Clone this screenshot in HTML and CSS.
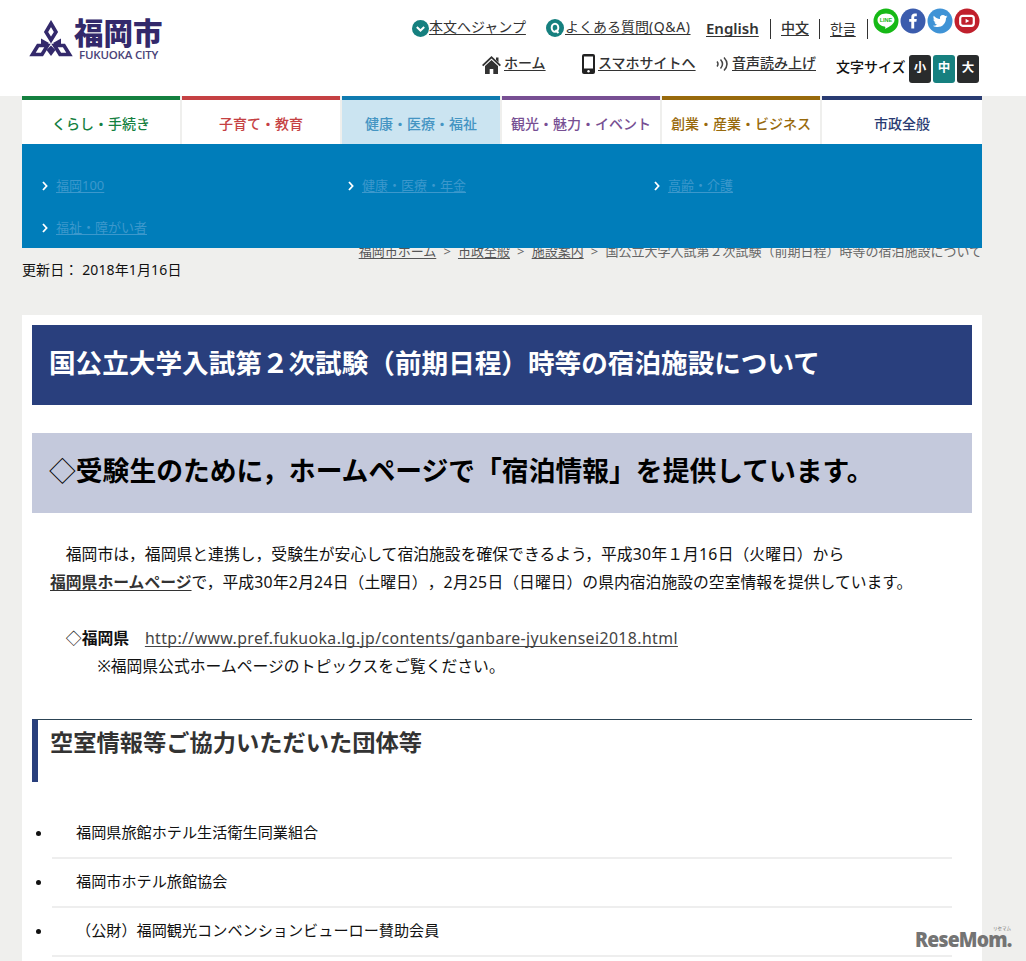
FILE: index.html
```html
<!DOCTYPE html>
<html lang="ja">
<head>
<meta charset="utf-8">
<title>福岡市</title>
<link rel="stylesheet" href="styles.css">
</head>
<body>
<header class="header">
  <div class="logo">
    <svg class="logo-mark" width="44" height="38" viewBox="0 0 44 38">
      <g fill="none" stroke="#33296b" stroke-width="3.6">
        <path d="M22 3.5L27 12L22 20L17 12Z"/>
        <path d="M3.5 34.5L9 25.500L18.500 25.500L13 34.500Z"/>
        <path d="M40.500 34.500L35 25.500L25.500 25.500L31 34.500Z"/>
      </g>
      <g fill="#33296b">
        <path d="M12 18.500L20 23L16 26.500L12 25Z"/>
        <path d="M32 18.500L24 23L28 26.500L32 25Z"/>
        <path d="M22 25.500L26.500 30L22 36L17.500 30Z"/>
      </g>
    </svg>
    <div class="logo-text"><span class="logo-ja">福岡市</span><span class="logo-en">FUKUOKA CITY</span></div>
  </div>
  <div class="tools">
    <div class="row row-top">
      <span class="item"><svg class="ic-jump" width="17" height="17" viewBox="0 0 17 17"><circle cx="8.500" cy="8.500" r="8.500" fill="#16807f"/><path d="M4.800 7l3.700 3.500L12.200 7" fill="none" stroke="#fff" stroke-width="2"/></svg><a href="#" class="link">本文へジャンプ</a></span>
      <span class="item"><svg class="ic-q" width="18" height="18" viewBox="0 0 18 18"><circle cx="9" cy="9" r="9" fill="#16807f"/><ellipse cx="9" cy="8.800" rx="3.300" ry="4" fill="none" stroke="#fff" stroke-width="2"/><path d="M9.500 11l3 3" stroke="#fff" stroke-width="2"/></svg><a href="#" class="link qa">よくある質問<span class="qa">(Q&amp;A)</span></a></span>
      <span class="item lang"><a href="#" class="link eng">English</a></span>
      <span class="item lang bar"><a href="#" class="link mid">中文</a></span>
      <span class="item lang bar"><a href="#" class="link">한글</a></span>
      <span class="item lang bar"></span>
      <span class="social">
        <svg width="26" height="26" viewBox="0 0 26 26"><circle cx="13" cy="13" r="12.500" fill="#16b916"/><path d="M13 5.500c-5 0-8.500 2.900-8.500 6.600 0 3.300 2.900 5.900 7 6.500 1.100.2.900 1.100.7 2.400 3.900-2 9.300-5.100 9.300-8.900 0-3.700-3.500-6.600-8.500-6.600z" fill="#fff"/><text x="13" y="14.200" text-anchor="middle" class="line-label">LINE</text></svg>
        <svg width="26" height="26" viewBox="0 0 26 26"><circle cx="13" cy="13" r="12.500" fill="#3b5cad"/><path d="M11.300 20.500v-6.700H9.200v-2.700h2.100V9.200c0-2.400 1.300-3.700 3.500-3.700h2v2.700h-1.300c-1 0-1.300.4-1.300 1.300v1.600h2.600l-.4 2.700h-2.200v6.700z" fill="#fff"/></svg>
        <svg width="26" height="26" viewBox="0 0 26 26"><circle cx="13" cy="13" r="12.500" fill="#3f93d6"/><path d="M20.500 8.600c-.6.3-1.100.4-1.700.5.600-.4 1.100-1 1.300-1.700-.6.400-1.200.6-1.900.7a3 3 0 0 0-5.200 2.800c-2.500-.1-4.700-1.300-6.200-3.200-.8 1.400-.4 3.200.9 4-.5 0-.9-.1-1.300-.4 0 1.500 1 2.700 2.400 3-.4.1-.9.100-1.300.1.400 1.200 1.500 2 2.800 2.100A6 6 0 0 1 5.900 17.700c5.800 3.600 13.200.1 13.100-7.600.6-.4 1.100-.9 1.500-1.500z" fill="#fff"/></svg>
        <svg width="26" height="26" viewBox="0 0 26 26"><circle cx="13" cy="13" r="12.500" fill="#c0202c"/><rect x="6.200" y="7.800" width="13.600" height="10" rx="2.500" fill="none" stroke="#fff" stroke-width="2.200"/><path d="M11.600 10.700l3.700 2.200-3.700 2.200z" fill="#fff"/></svg>
      </span>
    </div>
    <div class="row row-bottom">
      <span class="item"><svg class="ic-home" width="19" height="18" viewBox="0 0 19 18"><path d="M9.500 0L19 9l-1.300 1.300L9.500 2.600 1.300 10.300 0 9z" fill="#333"/><path d="M14 1.500h2.500v5L14 4z" fill="#333"/><path d="M9.500 4l6.500 6v8h-4.700v-5H7.700v5H3v-8z" fill="#333"/></svg><a href="#" class="link mid">ホーム</a></span>
      <span class="item"><svg class="ic-phone" width="15" height="20" viewBox="0 0 15 20"><rect x="1" y="0" width="13" height="20" rx="2" fill="#222"/><rect x="3" y="2.500" width="9" height="12" fill="#fff"/><circle cx="7.500" cy="17.300" r="1.200" fill="#fff"/></svg><a href="#" class="link mid">スマホサイトへ</a></span>
      <span class="item"><svg class="ic-wave" width="14" height="16" viewBox="0 0 14 16"><path d="M2 5.500q2 2.500 0 5M5.500 3.500q4 4.500 0 9M9 1.500q6 6.500 0 13" fill="none" stroke="#444" stroke-width="1.500"/></svg><a href="#" class="link mid">音声読み上げ</a></span>
      <span class="item size-label">文字サイズ</span>
      <span class="sizes"><b>小</b><b class="on">中</b><b>大</b></span>
    </div>
  </div>
</header>
<div class="wrap">
  <nav class="tabs">
    <a class="tab green">くらし・手続き</a>
    <a class="tab red">子育て・教育</a>
    <a class="tab blue">健康・医療・福祉</a>
    <a class="tab purple">観光・魅力・イベント</a>
    <a class="tab brown">創業・産業・ビジネス</a>
    <a class="tab navy">市政全般</a>
    <ul class="menu">
      <li><svg width="6" height="10" viewBox="0 0 6 10"><path d="M1 1l3.600 4L1 9"/></svg><a href="#">福岡100</a></li>
      <li><svg width="6" height="10" viewBox="0 0 6 10"><path d="M1 1l3.600 4L1 9"/></svg><a href="#">健康・医療・年金</a></li>
      <li><svg width="6" height="10" viewBox="0 0 6 10"><path d="M1 1l3.600 4L1 9"/></svg><a href="#">高齢・介護</a></li>
      <li><svg width="6" height="10" viewBox="0 0 6 10"><path d="M1 1l3.600 4L1 9"/></svg><a href="#">福祉・障がい者</a></li>
    </ul>
  </nav>
  <div class="crumbs"><a href="#">福岡市ホーム</a><i>&gt;</i><a href="#">市政全般</a><i>&gt;</i><a href="#">施設案内</a><i>&gt;</i><span>国公立大学入試第２次試験（前期日程）時等の宿泊施設について</span></div>
  <p class="updated">更新日： 2018年1月16日</p>
  <main class="content">
    <h1 class="title">国公立大学入試第２次試験（前期日程）時等の宿泊施設について</h1>
    <h2 class="lead"><span class="dia">◇</span>受験生のために，ホームページで「宿泊情報」を提供しています。</h2>
    <div class="text">
      <p>　福岡市は，福岡県と連携し，受験生が安心して宿泊施設を確保できるよう，平成<span class="n">30</span>年１月<span class="n">16</span>日（火曜日）から</p>
      <p><a href="#" class="pref">福岡県ホームページ</a>で，平成<span class="n">30</span>年<span class="n">2</span>月<span class="n">24</span>日（土曜日），<span class="n">2</span>月<span class="n">25</span>日（日曜日）の県内宿泊施設の空室情報を提供しています。</p>
      <p class="gap">　◇<b>福岡県</b>　<a href="#" class="url">http://www.pref.fukuoka.lg.jp/contents/ganbare-jyukensei2018.html</a></p>
      <p>　　　※福岡県公式ホームページのトピックスをご覧ください。</p>
    </div>
    <h3 class="section">空室情報等ご協力いただいた団体等</h3>
    <ul class="groups">
      <li><i></i><span>福岡県旅館ホテル生活衛生同業組合</span></li>
      <li><i></i><span>福岡市ホテル旅館協会</span></li>
      <li><i></i><span>（公財）福岡観光コンベンションビューロー賛助会員</span></li>
    </ul>
  </main>
</div>
<div class="mark"><small>リセマム</small><span>ReseMom.</span></div>
</body>
</html>
```
FILE: styles.css
```css
* { box-sizing: border-box; margin: 0; padding: 0; }
body {
  height: 961px;
  overflow: hidden;
  position: relative;
  background: #efefed;
  color: #111;
  font-family: "Noto Sans", "Noto Sans CJK JP", "Noto Sans CJK KR", sans-serif;
  text-spacing-trim: space-all;
}
ul { list-style: none; }
i { font-style: normal; }
svg { flex: none; display: block; }
.header { height: 96px; background: #fff; display: flex; }
.logo { width: 412px; padding: 20px 0 0 29px; display: flex; gap: 1px; color: #33296b; }
.logo-text { display: flex; flex-direction: column; white-space: nowrap; }
.logo-ja { font-size: 29.500px; line-height: 25px; font-weight: 900; }
.logo-en { font: 600 11.500px/14px "Open Sans", sans-serif; padding-left: 5px; margin-top: 3px; letter-spacing: -0.200px; color: #4a4278; }
.tools { width: 570px; font-size: 14px; line-height: 20px; white-space: nowrap; }
.row { display: grid; }
.row-top { grid-template-columns: 134px 161px 63px 49px 48px 7px 108px; padding-top: 8px; height: 48px; }
.row-bottom { grid-template-columns: 99px 135px 120px 73px 71px; padding-left: 70px; }
.item { display: flex; height: 20px; margin-top: 9px; }
.link { color: #333; text-decoration: underline; text-underline-offset: 2px; text-decoration-thickness: 1px; text-decoration-skip-ink: none; }
.mid { font-weight: 500; }
.qa span { letter-spacing: 0.600px; }
.ic-jump { margin-top: 3px; }
.ic-q { margin: 2px 1px 0 0; }
.lang { margin-top: 11px; }
.bar { border-left: 1px solid #333; padding-left: 10px; }
.lang .eng { font-weight: 600; font-size: 15px; margin: -1px 0 0 -1px; }
.lang .mid { margin-top: -1px; }
.social { display: flex; gap: 1px; margin-left: -1px; }
.line-label { font: 700 5.500px "Liberation Sans", sans-serif; fill: #16b916; }
.row-bottom .item { margin-top: 5px; }
.ic-home { margin: 3px 3px 0 0; }
.ic-phone { margin: 1px 2px 0 0; }
.ic-wave { margin: 3px 3px 0 -1px; }
.row-bottom .size-label { margin-top: 9px; font-weight: 500; }
.sizes { display: flex; gap: 2px; margin-top: 7px; }
.sizes b { width: 22px; height: 28px; border-radius: 3px; background: #292b2c; color: #fff; font-size: 12.500px; line-height: 26px; text-align: center; }
.sizes .on { background: #16807f; }
.wrap { width: 960px; margin-left: 22px; }
.tabs { position: relative; display: grid; grid-template-columns: repeat(5, 158px) 160px; gap: 2px; height: 48px; }
.tab { border-top: 4px solid; background: #fff; text-align: center; font-size: 14px; line-height: 48px; height: 48px; font-weight: 500; white-space: nowrap; }
.green { color: #14803f; }
.red { color: #c54143; }
.blue { color: #4595c3; border-top-color: #0f7bb0; background: #cbe4f1; }
.purple { color: #774f93; }
.brown { color: #986a0c; }
.navy { color: #293b72; }
.menu { position: absolute; top: 48px; left: 0; width: 960px; height: 104px; background: #007dba; padding: 20px 20px; display: grid; grid-template-columns: repeat(3, 306px); grid-auto-rows: 42px; }
.menu li { display: flex; align-items: center; gap: 8px; font-size: 13px; line-height: 20px; }
.menu svg { fill: none; stroke: #fff; stroke-width: 1.800; margin-top: 2px; }
.menu a { color: #3c98cc; text-underline-offset: 2px; text-decoration-thickness: 1px; text-decoration-skip-ink: none; }
.crumbs { display: flex; justify-content: flex-end; height: 16px; margin-top: 99px; font-size: 13px; line-height: 16px; color: #666; white-space: nowrap; }
.crumbs a { color: #555; text-underline-offset: 2px; text-decoration-thickness: 1px; text-decoration-skip-ink: none; }
.crumbs i { width: 21.700px; text-align: center; }
.updated { font-size: 14px; line-height: 20px; margin-top: 1px; letter-spacing: 0.120px; white-space: nowrap; }
.content { margin-top: 35px; background: #fff; padding: 10px; height: 650px; }
.title, .lead { height: 80px; padding-left: 17px; font-size: 26.620px; line-height: 76px; font-weight: 700; white-space: nowrap; }
.title { background: #293f7d; color: #fff; }
.lead { background: #c4c9dc; color: #000; margin-top: 28px; font-size: 26.800px; }
.dia { font-weight: 300; }
.text { margin-top: 27px; padding-left: 18px; font-size: 15.820px; line-height: 28px; white-space: nowrap; }
.n { letter-spacing: 0.350px; }
.pref { font-weight: 700; color: #333; text-underline-offset: 2px; text-decoration-skip-ink: none; }
.gap { margin-top: 28px; }
.url { color: #444; letter-spacing: 0.410px; text-underline-offset: 2px; text-decoration-thickness: 1px; text-decoration-skip-ink: none; }
.section { margin-top: 39px; height: 63px; border-left: 6px solid #293f7d; border-top: 1px solid #2c4455; padding-left: 12px; font-size: 23.250px; line-height: 45px; color: #333; white-space: nowrap; }
.groups { margin-top: 28px; font-size: 15.150px; line-height: 44px; }
.groups li { display: flex; height: 49px; }
.groups i { width: 5px; height: 5px; margin: 21px 14px 0 4px; border-radius: 50%; background: #111; flex: none; }
.groups span { width: 900px; margin-left: -3px; padding-left: 24px; border-bottom: 2px solid #eee; }
.mark { position: absolute; left: 915px; top: 926px; width: 100px; color: #747474; }
.mark small { display: block; padding-left: 78px; font-size: 4.500px; line-height: 5px; height: 5px; white-space: nowrap; }
.mark span { display: block; font: 800 21.500px/16px "Open Sans", sans-serif; letter-spacing: -0.900px; transform: scaleX(0.9); transform-origin: left; }
```
